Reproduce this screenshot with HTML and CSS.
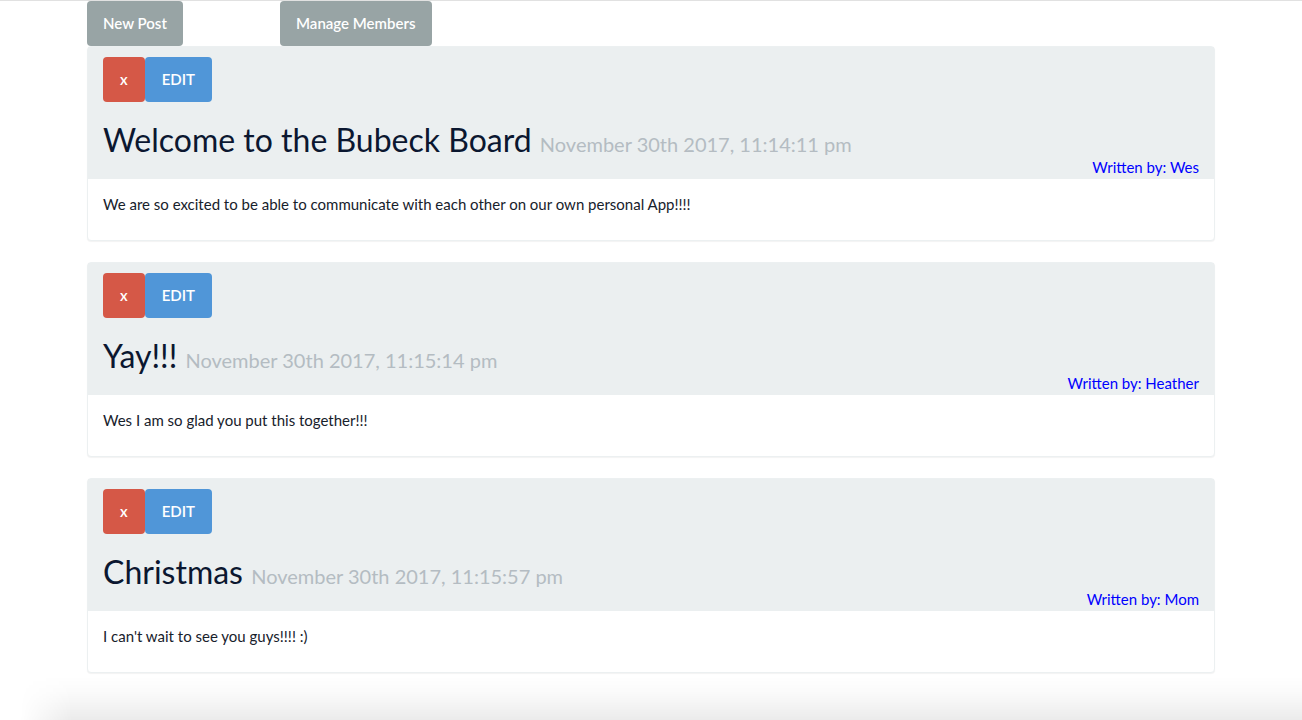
FILE: index.html
```html
<!DOCTYPE html>
<html lang="en">
<head>
<meta charset="utf-8">
<meta name="viewport" content="width=device-width, initial-scale=1">
<title>Bubeck Board</title>
<link rel="stylesheet" href="styles.css">
</head>
<body>
<main class="container">
  <nav class="toolbar">
    <div class="tool"><button type="button" class="btn btn-default">New Post</button></div>
    <div class="tool"><button type="button" class="btn btn-default">Manage Members</button></div>
  </nav>
  <article class="panel">
    <header class="panel-heading">
      <div class="actions"><button type="button" class="btn btn-danger">x</button><button type="button" class="btn btn-info">EDIT</button></div>
      <h2 class="title">Welcome to the Bubeck Board <small>November 30th 2017, 11:14:11 pm</small></h2>
      <p class="author">Written by: Wes</p>
    </header>
    <div class="panel-body"><p>We are so excited to be able to communicate with each other on our own personal App!!!!</p></div>
  </article>
  <article class="panel">
    <header class="panel-heading">
      <div class="actions"><button type="button" class="btn btn-danger">x</button><button type="button" class="btn btn-info">EDIT</button></div>
      <h2 class="title">Yay!!! <small>November 30th 2017, 11:15:14 pm</small></h2>
      <p class="author">Written by: Heather</p>
    </header>
    <div class="panel-body"><p>Wes I am so glad you put this together!!!</p></div>
  </article>
  <article class="panel">
    <header class="panel-heading">
      <div class="actions"><button type="button" class="btn btn-danger">x</button><button type="button" class="btn btn-info">EDIT</button></div>
      <h2 class="title">Christmas <small>November 30th 2017, 11:15:57 pm</small></h2>
      <p class="author">Written by: Mom</p>
    </header>
    <div class="panel-body"><p>I can't wait to see you guys!!!! :)</p></div>
  </article>
</main>
<div class="bottom-shade"></div>
</body>
</html>
```
FILE: styles.css
```css
* { box-sizing: border-box; }
body {
  margin: 0;
  border-top: 1px solid #e1e1e1;
  background: #fff;
  color: #17212b;
  font-family: Lato, "Helvetica Neue", Arial, sans-serif;
  font-size: 15px;
  line-height: 21px;
}
.container {
  max-width: 1128px;
  margin: 0 auto;
}
.toolbar {
  display: flex;
}
.tool {
  width: 193px;
}
.btn {
  display: inline-block;
  height: 45px;
  padding: 0 17px;
  border: 0;
  border-radius: 4px;
  color: #fff;
  font: inherit;
  font-weight: 600;
  cursor: pointer;
}
.btn-default {
  padding: 0 16px;
  background: #98a4a5;
}
.btn-danger { background: #d55847; }
.btn-info { background: #5096d8; }
.panel {
  margin-bottom: 21px;
  border: 1px solid #ecf0f1;
  border-radius: 4px;
  background: #fff;
  box-shadow: 0 1px 1px rgba(0, 0, 0, 0.05);
}
.panel-heading {
  padding: 10px 15px 1px;
  background: #ebeff0;
}
.actions {
  display: flex;
}
.title {
  margin: 21px 0 0;
  color: #0b1730;
  font-size: 32px;
  font-weight: 400;
  line-height: 34px;
}
.title small {
  color: #b4bcc2;
  font-size: 20px;
  line-height: 1;
}
.author {
  margin: 0;
  color: #00f;
  text-align: right;
}
.panel-body {
  padding: 15px 15px 25px;
}
.panel-body p {
  margin: 0;
}
.bottom-shade {
  position: fixed;
  right: 0;
  bottom: 0;
  left: 0;
  height: 44px;
  background: linear-gradient(to bottom, rgba(0, 0, 0, 0), rgba(0, 0, 0, 0.02) 40%, rgba(0, 0, 0, 0.08));
  -webkit-mask-image: linear-gradient(to right, transparent 20px, #000 72px);
  mask-image: linear-gradient(to right, transparent 20px, #000 72px);
  pointer-events: none;
}
```
